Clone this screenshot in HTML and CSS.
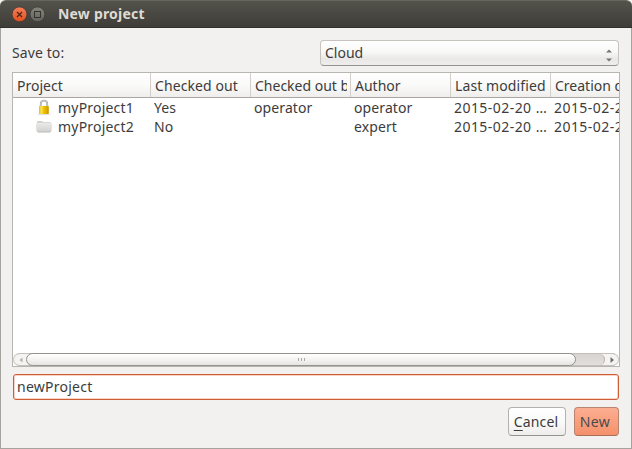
FILE: index.html
```html
<!DOCTYPE html>
<html lang="en">
<head>
<meta charset="utf-8">
<title>New project</title>
<link rel="stylesheet" href="styles.css">
</head>
<body>
<div class="window">
  <header class="titlebar">
    <svg class="controls" width="36" height="18" viewBox="0 0 36 18">
      <defs>
        <linearGradient id="close" x1="0" y1="0" x2="0" y2="1"><stop offset="0" stop-color="#f67f59"/><stop offset="1" stop-color="#e2501e"/></linearGradient>
        <linearGradient id="max" x1="0" y1="0" x2="0" y2="1"><stop offset="0" stop-color="#85837b"/><stop offset="1" stop-color="#65635c"/></linearGradient>
      </defs>
      <circle cx="8.5" cy="9.3" r="7.4" fill="url(#close)" stroke="#3b3833" stroke-width=".7"/>
      <path d="M6 7l5 5M11 7l-5 5" stroke="#4b2415" stroke-width="1.2"/>
      <circle cx="26.5" cy="9.3" r="7.4" fill="url(#max)" stroke="#3b3833" stroke-width=".7"/>
      <rect x="23.5" y="6.5" width="6" height="6" fill="none" stroke="#34332e"/>
    </svg>
    <h1 class="title">New project</h1>
  </header>
  <main class="content">
    <div class="save-row">
      <span class="save-label">Save to:</span>
      <div class="combo">
        <span class="combo-text">Cloud</span>
        <svg width="6" height="13" viewBox="0 0 6 13" fill="#777572"><path d="M0 3.5L3 .5l3 3zM0 9.5h6l-3 3z"/></svg>
      </div>
    </div>
    <section class="table">
      <div class="grid head">
        <span class="th">Project</span><span class="th out">Checked out</span><span class="th by"><span>Checked out by</span></span><span class="th">Author</span><span class="th mod">Last modified</span><span class="th">Creation date</span>
      </div>
      <div class="grid row">
        <span class="name">
          <svg width="16" height="17" viewBox="0 0 16 17">
            <defs><linearGradient id="gold"><stop offset="0" stop-color="#d9a800"/><stop offset=".2" stop-color="#ffe867"/><stop offset=".45" stop-color="#f2c500"/><stop offset="1" stop-color="#c99700"/></linearGradient></defs>
            <ellipse cx="8" cy="15.2" rx="6.5" ry="1" fill="#e4e4e2"/>
            <path d="M4.8 8V4.8a3.2 3.2 0 0 1 6.4 0V8" fill="none" stroke="#a3a4a0" stroke-width="1.9"/>
            <path d="M4.8 8V4.8a3.2 3.2 0 0 1 6.4 0V8" fill="none" stroke="#dededb" stroke-width=".7"/>
            <rect x="3.2" y="7" width="9.6" height="8" rx=".8" fill="url(#gold)"/>
          </svg><span>myProject1</span></span>
        <span>Yes</span><span>operator</span><span>operator</span><span class="date">2015-02-20 …</span><span class="date">2015-02-20 …</span>
      </div>
      <div class="grid row">
        <span class="name">
          <svg width="16" height="17" viewBox="0 0 16 17">
            <defs><linearGradient id="folder" x1="0" y1="0" x2="0" y2="1"><stop offset="0" stop-color="#ebebea"/><stop offset="1" stop-color="#d0d0cf"/></linearGradient></defs>
            <path d="M1 4.2q0-1.2 1.2-1.2h3.8l1 1h6.8q1.2 0 1.2 1.2v7H1z" fill="#cfcfce"/>
            <path d="M0 6.2q0-1.4 1.4-1.4h13.2q1.4 0 1.4 1.4l-.4 6.4q-.1 1.6-1.6 1.6H2q-1.500-.1-1.600-1.600z" fill="url(#folder)"/>
            <path d="M1.600 14h12.800" stroke="#b8b8b7" stroke-width=".8"/>
          </svg><span>myProject2</span></span>
        <span>No</span><span></span><span>expert</span><span class="date">2015-02-20 …</span><span class="date">2015-02-20 …</span>
      </div>
      <div class="scrollbar">
        <svg class="arrow" width="13" height="14" viewBox="0 0 13 14"><path d="M9.5 4.500v5L6.500 7z" fill="#b3b1ae"/></svg>
        <div class="thumb"><i></i><i></i><i></i></div>
        <div class="trough"></div>
        <svg class="arrow" width="14" height="14" viewBox="0 0 14 14"><path d="M5.500 4v6L9 7z" fill="#73716d"/></svg>
      </div>
    </section>
    <div class="field">newProject</div>
    <footer class="actions">
      <div class="button cancel"><span><u>C</u>ancel</span></div>
      <div class="button new"><span>New</span></div>
    </footer>
  </main>
</div>
</body>
</html>
```
FILE: styles.css
```css
* { box-sizing: border-box; }
body {
  margin: 0;
  background: #f2f1f0;
  color: #3c3c3c;
  font: 14px/19px "Noto Sans", "Open Sans", sans-serif;
  overflow: hidden;
}
.window {
  width: 632px;
  height: 449px;
  background: #f2f1f0;
  display: flex;
  flex-direction: column;
}
.titlebar {
  height: 28px;
  flex: none;
  display: flex;
  align-items: center;
  padding-left: 11px;
  background: linear-gradient(#53524b, #3e3d38);
  border-top: 1px solid #66645c;
  border-bottom: 1px solid #302f2b;
  border-radius: 6px 6px 0 0;
}
.title {
  margin: 0 0 0 11px;
  font-size: 14px;
  line-height: 20px;
  font-weight: 700;
  color: #dfdbd2;
  letter-spacing: 0.2px;
}
.content {
  flex: 1;
  padding: 12px 12px 0 11px;
  border: 1px solid #a6a39e;
  border-top: 0;
  display: flex;
  flex-direction: column;
}
.save-row { display: flex; justify-content: space-between; align-items: center; height: 26px; }
.save-label, .combo-text { margin-top: -2px; }
.save-label { letter-spacing: 0.1px; }
.combo {
  width: 299px;
  height: 26px;
  display: flex;
  justify-content: space-between;
  align-items: center;
  padding: 0 6px 0 4px;
  border: 1px solid #c6c3bf;
  border-bottom-color: #96938f;
  border-radius: 4px;
  background: linear-gradient(#fff, #f8f8f7 45%, #e9e8e6 75%, #efeeec);
}
.combo svg { margin-top: 5px; }
.table {
  width: 608px;
  height: 295px;
  margin-top: 6px;
  border: 1px solid #b9b5b0;
  background: #fff;
  display: flex;
  flex-direction: column;
  overflow: hidden;
}
.grid { display: grid; grid-template-columns: 138px repeat(5, 100px); flex: none; white-space: nowrap; }
.head {
  height: 25px;
  background: linear-gradient(#fff, #fafaf9 50%, #efeeed);
  border-bottom: 1px solid #aaa6a1;
}
.th {
  border-right: 1px solid #d2cfcb;
  padding-left: 4px;
  line-height: 25px;
  overflow: hidden;
}
.out { letter-spacing: 0.08px; }
.mod { letter-spacing: 0.1px; }
.by span { display: block; width: 92px; overflow: hidden; }
.row { height: 19px; }
.row > span { padding-left: 3px; letter-spacing: 0.1px; }
.row > .date { letter-spacing: 0.45px; }
.row > .name { padding-left: 23px; display: flex; align-items: center; gap: 6px; letter-spacing: 0.2px; }
.scrollbar {
  margin-top: auto;
  height: 13px;
  flex: none;
  display: flex;
  border-top: 1px solid #c3c0bc;
  border-bottom: 1px solid #c3c0bc;
  border-radius: 7px;
  background: #f5f4f2;
  box-shadow: inset 1px 0 #cfccc8, inset -1px 0 #cfccc8;
}
.arrow { margin-top: -1px; flex: none; }
.thumb {
  width: 550px;
  height: 13px;
  margin-top: -1px;
  flex: none;
  border: 1px solid #96938f;
  border-radius: 7px;
  background: linear-gradient(#fff, #f2f1ef 60%, #e6e4e1);
  display: flex;
  justify-content: center;
  align-items: center;
  gap: 2px;
  z-index: 1;
}
.thumb i { width: 1px; height: 3px; background: #aaa8a4; }
.trough {
  flex: 1;
  margin-left: -8px;
  background: linear-gradient(#d6d3d0, #e2dfdc);
  border-right: 1px solid #b5b1ac;
  border-radius: 0 6px 6px 0;
}
.field {
  height: 26px;
  width: 606px;
  margin: 7px 0 0 1px;
  flex: none;
  padding-left: 3px;
  line-height: 23px;
  letter-spacing: 0.25px;
  background: #fff;
  border: 1px solid #ce5c35;
  border-radius: 3px;
  box-shadow: inset 0 0 0 1px #f8d4c6;
}
.actions { display: flex; justify-content: flex-end; gap: 8px; margin-top: 7px; }
.button {
  height: 29px;
  border: 1px solid #b5b2ae;
  border-bottom-color: #96938f;
  border-radius: 4px;
  display: flex;
  justify-content: center;
  align-items: center;
  padding-right: 2px;
  letter-spacing: 0.15px;
}
.cancel { width: 58px; background: linear-gradient(#fff, #fafaf9 50%, #eeedeb); }
.new { width: 45px; padding-right: 3px; letter-spacing: 0.4px; color: #4c4c4c; background: linear-gradient(#fcae92, #f5906b); border-color: #b98570; border-bottom-color: #a86e58; }
.button u { text-underline-offset: 3px; }
```
